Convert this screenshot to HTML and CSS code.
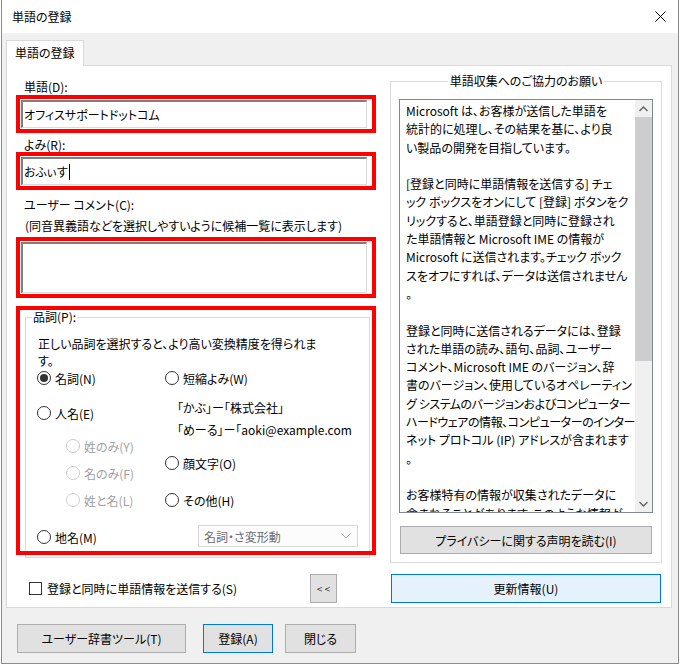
FILE: index.html
```html
<!DOCTYPE html>
<html lang="ja">
<head>
<meta charset="utf-8">
<title>単語の登録</title>
<link rel="stylesheet" href="styles.css">
</head>
<body>
<div class="dialog">
  <div class="titlebar">
    <span class="title">単語の登録</span>
    <svg class="close" width="11" height="11" viewBox="0 0 11 11"><path d="M0.5 0.5L10.5 10.5M10.5 0.5L0.5 10.5" stroke="#000" stroke-width="1" fill="none"/></svg>
  </div>
  <div class="content">
    <div class="tabs"><div class="tab">単語の登録</div></div>
    <div class="panel">
      <div class="left">
        <div class="label l1">単語(D):</div>
        <div class="mark"><div class="edit">オフィスサポートドットコム</div></div>
        <div class="label l2">よみ(R):</div>
        <div class="mark"><div class="edit">おふぃす<span class="caret"></span></div></div>
        <div class="label l3">ユーザー コメント(C):</div>
        <div class="label l4">(同音異義語などを選択しやすいように候補一覧に表示します)</div>
        <div class="mark m3"><div class="edit multi"></div></div>
        <div class="mark m4">
          <div class="group">
            <span class="group-title">品詞(P):</span>
            <p class="desc">正しい品詞を選択すると、より高い変換精度を得られま<br>す。</p>
            <div class="options">
              <div class="col col-a">
                <div class="radio checked"><span class="dot"></span>名詞(N)</div>
                <div class="radio r-person"><span class="dot"></span>人名(E)</div>
                <div class="radio disabled sub r-sei"><span class="dot"></span>姓のみ(Y)</div>
                <div class="radio disabled sub r-mei"><span class="dot"></span>名のみ(F)</div>
                <div class="radio disabled sub r-both"><span class="dot"></span>姓と名(L)</div>
                <div class="radio r-place"><span class="dot"></span>地名(M)</div>
              </div>
              <div class="col col-b">
                <div class="radio"><span class="dot"></span>短縮よみ(W)</div>
                <div class="example ex1">「かぶ」ー「株式会社」</div>
                <div class="example ex2">「めーる」ー「aoki@example.com</div>
                <div class="radio r-face"><span class="dot"></span>顔文字(O)</div>
                <div class="radio r-other"><span class="dot"></span>その他(H)</div>
                <div class="combo"><span>名詞・さ変形動</span><svg width="10" height="6" viewBox="0 0 10 6"><path d="M0.5 0.5L5 5L9.5 0.5" stroke="#b4b4b4" fill="none"/></svg></div>
              </div>
            </div>
          </div>
        </div>
        <div class="send-row">
          <span class="checkbox"></span>
          <span class="check-label">登録と同時に単語情報を送信する(S)</span>
          <button class="btn collapse">&lt; &lt;</button>
        </div>
      </div>
      <div class="right">
        <div class="info-group">
          <div class="info-title"><span>単語収集へのご協力のお願い</span></div>
          <div class="notice">
            <div class="notice-text">
              <div>Microsoft は、お客様が送信した単語を</div>
              <div>統計的に処理し、その結果を基に、より良</div>
              <div>い製品の開発を目指しています。</div>
              <div>&nbsp;</div>
              <div>[登録と同時に単語情報を送信する] チェ</div>
              <div>ック ボックスをオンにして [登録] ボタンをク</div>
              <div>リックすると、単語登録と同時に登録され</div>
              <div>た単語情報と Microsoft IME の情報が</div>
              <div>Microsoft に送信されます。チェック ボック</div>
              <div>スをオフにすれば、データは送信されません</div>
              <div>。</div>
              <div>&nbsp;</div>
              <div>登録と同時に送信されるデータには、登録</div>
              <div>された単語の読み、語句、品詞、ユーザー</div>
              <div>コメント、Microsoft IME のバージョン、辞</div>
              <div>書のバージョン、使用しているオペレーティン</div>
              <div class="tight">グ システムのバージョンおよびコンピューター</div>
              <div class="tight">ハードウェアの情報、コンピューターのインター</div>
              <div>ネット プロトコル (IP) アドレスが含まれます</div>
              <div>。</div>
              <div>&nbsp;</div>
              <div>お客様特有の情報が収集されたデータに</div>
              <div>含まれることがあります。このような情報が</div>
            </div>
            <div class="scrollbar">
              <div class="sb-btn"><svg width="9" height="6" viewBox="0 0 9 6"><path d="M0.5 5L4.5 1L8.5 5" stroke="#606060" stroke-width="1.3" fill="none"/></svg></div>
              <div class="sb-thumb"></div>
              <div class="sb-track"></div>
              <div class="sb-btn"><svg width="9" height="6" viewBox="0 0 9 6"><path d="M0.5 1L4.5 5L8.5 1" stroke="#606060" stroke-width="1.3" fill="none"/></svg></div>
            </div>
          </div>
          <button class="btn privacy">プライバシーに関する声明を読む(I)</button>
        </div>
        <button class="btn update">更新情報(U)</button>
      </div>
    </div>
    <div class="footer">
      <button class="btn tool">ユーザー辞書ツール(T)</button>
      <button class="btn register">登録(A)</button>
      <button class="btn closebtn">閉じる</button>
    </div>
  </div>
</div>
</body>
</html>
```
FILE: styles.css
```css
* { box-sizing: border-box; }

body {
  margin: 0;
  background: #ffffff;
  font-family: "Noto Sans CJK JP", "Noto Sans", sans-serif;
  font-size: 12px;
  color: #000;
  font-feature-settings: "palt";
}

.dialog {
  margin-left: 1px;
  width: 678px;
  height: 664px;
  border: 1px solid #8c8c8c;
  border-top: none;
  background: #f0f0f0;
}

.titlebar {
  height: 33px;
  background: #fff;
  display: flex;
  align-items: center;
  justify-content: space-between;
  padding: 0 12px 0 10px;
}

.title { font-size: 12px; }

.content { padding: 7px 6px 0 4px; }

.tabs { display: flex; }

.tab {
  height: 26px;
  padding: 0 8px;
  line-height: 24px;
  background: #fff;
  border: 1px solid #d9d9d9;
  border-bottom: none;
  margin-bottom: -1px;
  position: relative;
  z-index: 1;
}

.panel {
  width: 666px;
  height: 543px;
  background: #fff;
  border: 1px solid #d9d9d9;
  display: flex;
  gap: 14px;
  padding: 14px 9px 0 9px;
}

/* left column */
.left { width: 360px; display: flex; flex-direction: column; flex: none; }

.label { height: 14px; line-height: 14px; padding-left: 8px; white-space: nowrap; }
.l1 { margin-bottom: 1px; }
.l2 { margin-top: 5px; }
.l3 { margin-top: 8px; }
.l4 { margin-top: 7px; padding-left: 9px; }

.mark {
  border: 4px solid #ff0000;
  padding: 1px 5px 1px 1px;
  background: #fff;
}
.m3 { margin-top: 4px; }

.edit {
  height: 28px;
  border-style: solid;
  border-width: 2px 1px 1px 2px;
  border-color: #7f7f7f #dcdcdc #dcdcdc #7f7f7f;
  padding-left: 1px;
  display: flex;
  align-items: center;
  white-space: nowrap;
}
.edit.multi { height: 51px; }

.caret {
  display: inline-block;
  width: 1px;
  height: 16px;
  background: #000;
  margin-left: 1px;
}

.m4 {
  margin-top: 8px;
  height: 249px;
  padding: 0 2px 0 5px;
  position: relative;
}
/* the annotation frame lies over the group box's lower edge */
.m4::after {
  content: "";
  position: absolute;
  left: -4px;
  right: -4px;
  bottom: -4px;
  height: 4px;
  background: #ff0000;
  z-index: 2;
}

.group {
  margin-top: 7px;
  border: 1px solid #dcdcdc;
  position: relative;
  padding: 17px 0 10px 11px;
}

.group-title {
  position: absolute;
  top: -8px;
  left: 6px;
  padding: 0 1px;
  line-height: 14px;
  background: #fff;
}

.desc { margin: 0 0 0 1px; line-height: 17px; white-space: nowrap; }

.options { display: flex; }
.col { display: flex; flex-direction: column; }
.col-a { width: 128px; flex: none; }
.col-b { flex: 1; }

.radio {
  display: flex;
  align-items: center;
  height: 18px;
  white-space: nowrap;
}
.radio .dot {
  width: 14px;
  height: 14px;
  border: 1px solid #333;
  border-radius: 50%;
  margin-right: 4px;
  flex: none;
  display: flex;
  align-items: center;
  justify-content: center;
  background: #fff;
}
.radio.checked .dot::after {
  content: "";
  width: 8px;
  height: 8px;
  border-radius: 50%;
  background: #333;
}
.radio.disabled { color: #a0a0a0; }
.radio.disabled .dot { border-color: #cccccc; }
.sub { margin-left: 29px; }

.r-person { margin-top: 17px; }
.r-sei { margin-top: 15px; }
.r-mei { margin-top: 9px; }
.r-both { margin-top: 9px; }
.r-place { margin-top: 19px; }

.example { height: 18px; line-height: 18px; padding-left: 12px; white-space: nowrap; }
.ex1 { margin-top: 12px; }
.ex2 { margin-top: 4px; }
.r-face { margin-top: 15px; }
.r-other { margin-top: 19px; }

.combo {
  margin-top: 16px;
  margin-left: 33px;
  width: 160px;
  height: 22px;
  border: 1px solid #d9d9d9;
  background: #fcfcfc;
  color: #6d6d6d;
  display: flex;
  align-items: center;
  justify-content: space-between;
  padding: 0 6px 0 5px;
  white-space: nowrap;
}

.send-row {
  margin-top: 19px;
  height: 29px;
  display: flex;
  align-items: center;
  padding-left: 13px;
}
.checkbox {
  width: 13px;
  height: 13px;
  border: 1px solid #333;
  background: #fff;
  margin-right: 5px;
  flex: none;
}
.check-label { white-space: nowrap; }

.btn {
  font-family: inherit;
  font-size: 12px;
  font-feature-settings: "palt";
  color: #000;
  background: #e1e1e1;
  border: 1px solid #adadad;
  padding: 0;
  margin: 0;
  white-space: nowrap;
}

.collapse {
  margin-left: auto;
  margin-right: 39px;
  width: 27px;
  height: 29px;
  font-size: 10px;
  color: #333;
}

/* right column */
.right { width: 272px; display: flex; flex-direction: column; flex: none; }

.info-group {
  margin-top: 1px;
  height: 482px;
  border: 1px solid #dcdcdc;
  position: relative;
  padding: 17px 8px 8px 8px;
  display: flex;
  flex-direction: column;
}
.info-title {
  position: absolute;
  top: -8px;
  left: 0;
  right: 0;
  display: flex;
  justify-content: center;
  line-height: 14px;
}
.info-title span { background: #fff; padding: 0 2px; }

.notice {
  height: 414px;
  border: 1px solid #828790;
  display: flex;
  background: #fff;
}
.notice-text {
  flex: 1;
  padding: 2px 0 0 6px;
  line-height: 18.3px;
  overflow: hidden;
  white-space: nowrap;
}
.notice-text .tight { letter-spacing: -0.45px; }

.scrollbar {
  width: 17px;
  flex: none;
  background: #f0f0f0;
  display: flex;
  flex-direction: column;
}
.sb-btn {
  height: 17px;
  display: flex;
  align-items: center;
  justify-content: center;
  flex: none;
}
.sb-thumb { height: 244px; background: #cdcdcd; flex: none; }
.sb-track { flex: 1; }

.privacy {
  margin: 13px 1px 0;
  height: 28px;
}

.update {
  margin: 11px 1px 0;
  height: 29px;
  background: #e5f1fb;
  border-color: #0078d7;
}

.footer {
  display: flex;
  padding: 16px 0 0 11px;
}
.footer .btn { height: 29px; }
.tool { width: 169px; }
.register { width: 70px; margin-left: 17px; border-color: #0078d7; }
.closebtn { width: 71px; margin-left: 12px; }
```
